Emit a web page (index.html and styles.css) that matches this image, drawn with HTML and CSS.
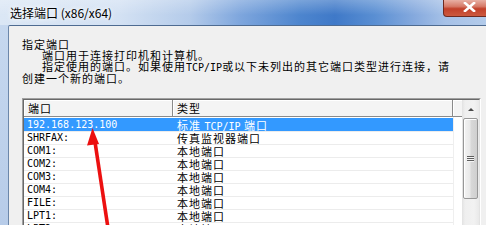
FILE: index.html
```html
<!DOCTYPE html>
<html lang="zh-CN">
<head>
<meta charset="utf-8">
<title>选择端口</title>
<link rel="stylesheet" href="styles.css">
</head>
<body>
<div class="window">
  <div class="titlebar">
    <span class="title">选择端口 (x86/x64)</span>
    <div class="close">
      <svg width="13" height="10" viewBox="0 0 13 10"><path d="M2 1 L11 9 M11 1 L2 9" stroke="#fff" stroke-width="2.6" stroke-linecap="square"/></svg>
    </div>
  </div>
  <div class="frame">
    <div class="client">
      <div class="desc">
        <div>指定端口</div>
        <div class="indent">端口用于连接打印机和计算机。</div>
        <div class="indent">指定使用的端口。如果使用<span class="mono">TCP/IP</span>或以下未列出的其它端口类型进行连接，请</div>
        <div>创建一个新的端口。</div>
      </div>
      <div class="listbox">
        <div class="listinner">
          <div class="listmain">
            <div class="header">
              <div class="hcell c1">端口</div>
              <div class="hcell c2">类型</div>
              <div class="hfill"></div>
            </div>
            <div class="rows">
              <div class="row selected"><div class="cell c1 mono">192.168.123.100</div><div class="cell c2">标准 <span class="mono">TCP/IP</span> 端口</div></div>
              <div class="row"><div class="cell c1 mono">SHRFAX:</div><div class="cell c2">传真监视器端口</div></div>
              <div class="row"><div class="cell c1 mono">COM1:</div><div class="cell c2">本地端口</div></div>
              <div class="row"><div class="cell c1 mono">COM2:</div><div class="cell c2">本地端口</div></div>
              <div class="row"><div class="cell c1 mono">COM3:</div><div class="cell c2">本地端口</div></div>
              <div class="row"><div class="cell c1 mono">COM4:</div><div class="cell c2">本地端口</div></div>
              <div class="row"><div class="cell c1 mono">FILE:</div><div class="cell c2">本地端口</div></div>
              <div class="row"><div class="cell c1 mono">LPT1:</div><div class="cell c2">本地端口</div></div>
              <div class="row"><div class="cell c1 mono">LPT2:</div><div class="cell c2">本地端口</div></div>
            </div>
          </div>
          <div class="scrollbar">
            <div class="sb-up"><span class="tri"></span></div>
            <div class="thumb"><span class="grip"></span></div>
          </div>
        </div>
      </div>
    </div>
  </div>
  <svg class="arrow" width="486" height="225" viewBox="0 0 486 225">
    <line x1="95" y1="142" x2="108" y2="228" stroke="#ec1010" stroke-width="3.6"/>
    <polygon points="92.5,128 99,144 87,145.5" fill="#ec1010"/>
  </svg>
</div>
</body>
</html>
```
FILE: styles.css
```css
html, body {
  margin: 0;
  padding: 0;
}
body {
  width: 486px;
  height: 225px;
  overflow: hidden;
  font-family: "Noto Sans CJK SC", "Noto Sans", sans-serif;
  font-size: 11px;
  letter-spacing: 1px;
  color: #000;
}
.window {
  position: relative;
  width: 486px;
  height: 225px;
  display: flex;
  flex-direction: column;
  overflow: hidden;
}
.titlebar {
  height: 25px;
  flex-shrink: 0;
  display: flex;
  align-items: flex-start;
  background:
    linear-gradient(to bottom, rgba(255,255,255,0.25), rgba(255,255,255,0) 60%),
    linear-gradient(to right, #dbe7f5 0px, #d3e1f3 120px, #b4cbea 190px, #7ea6dd 240px, #4d85ce 300px, #3f79c8 335px, #5a8fd3 375px, #86aade 415px, #a6c1e7 445px, #b3cbea 486px);
}
.title {
  padding-left: 10px;
  line-height: 25px;
  font-size: 12px;
  letter-spacing: 0;
  color: #000;
  text-shadow: 0 0 4px #fff, 0 0 6px #fff;
}
.close {
  margin-left: auto;
  margin-right: -9px;
  width: 52px;
  height: 17px;
  box-sizing: border-box;
  border: 1px solid #6e2a20;
  border-top: none;
  border-radius: 0 0 4px 4px;
  background: linear-gradient(to bottom, #e8b0a4 0%, #d67a68 40%, #c2402a 55%, #cc5a3f 100%);
  display: flex;
  align-items: center;
  justify-content: center;
  padding-bottom: 2px;
}
.close svg {
  display: block;
}
.frame {
  flex: 1;
  display: flex;
  padding-left: 8px;
  background: linear-gradient(to bottom, #c6d8ef, #b6cbe8);
}
.client {
  flex: 1;
  border-top: 1px solid #4e6b91;
  border-left: 1px solid #6c87aa;
  border-top-left-radius: 2px;
  background: #f0f0f0;
  padding: 13px 5px 0 13px;
  display: flex;
  flex-direction: column;
}
.desc {
  line-height: 11px;
  white-space: nowrap;
}
.indent {
  padding-left: 20px;
}
.mono {
  font-family: "DejaVu Sans Mono", "Liberation Mono", monospace;
  font-size: 10px;
  letter-spacing: 0;
}
.listbox {
  margin-top: 14px;
  flex: 1;
  display: flex;
  border: 1px solid;
  border-color: #a0a0a0 #ffffff #ffffff #a0a0a0;
}
.listinner {
  flex: 1;
  display: flex;
  border: 1px solid;
  border-color: #696969 #e3e3e3 #e3e3e3 #696969;
  background: #fff;
}
.listmain {
  flex: 1;
  display: flex;
  flex-direction: column;
  min-width: 0;
}
.header {
  height: 17px;
  box-sizing: border-box;
  display: flex;
  background: #f4f4f4;
  border-bottom: 1px solid #8a8a8a;
  flex-shrink: 0;
}
.hcell {
  box-sizing: border-box;
  line-height: 16px;
  border-right: 1px solid #8a8a8a;
  box-shadow: inset 1px 1px 0 #fff;
}
.hcell.c1 {
  width: 149px;
  padding-left: 4px;
}
.hcell.c2 {
  width: 280px;
  padding-left: 4px;
}
.hfill {
  flex: 1;
  box-shadow: inset 1px 1px 0 #fff;
}
.rows {
  padding-top: 1px;
  width: 430px;
  box-sizing: border-box;
  border-right: 1px solid #efefef;
  flex: 1;
}
.row {
  display: flex;
  height: 13px;
  box-sizing: border-box;
  border-top: 1px solid #ececec;
}
.row.selected {
  background: #3399ff;
  border-top-color: #3399ff;
  color: #fff;
}
.cell {
  box-sizing: border-box;
  line-height: 12px;
  white-space: nowrap;
}
.cell.c1 {
  width: 149px;
  padding-left: 3px;
}
.cell.c2 {
  width: 280px;
  padding-left: 4px;
}
.scrollbar {
  width: 17px;
  flex-shrink: 0;
  display: flex;
  flex-direction: column;
  background: linear-gradient(to right, #e2e2e2 0px, #efefef 3px, #f2f2f2 12px, #e9e9e9 17px);
}
.sb-up {
  height: 18px;
  display: flex;
  align-items: center;
  justify-content: center;
}
.tri {
  width: 0;
  height: 0;
  border-left: 3px solid transparent;
  border-right: 3px solid transparent;
  border-bottom: 3px solid #4a4a4a;
}
.thumb {
  height: 81px;
  margin: 0 1px;
  box-sizing: border-box;
  border: 1px solid #979797;
  border-radius: 2px;
  background: linear-gradient(to right, #f4f4f4 0%, #e9e9e9 45%, #d8d8d8 55%, #cfcfcf 100%);
  box-shadow: inset 1px 1px 0 #fff;
  display: flex;
  align-items: center;
  justify-content: center;
}
.grip {
  width: 7px;
  height: 6px;
  background: repeating-linear-gradient(to bottom, #5e5e5e 0px, #5e5e5e 1px, #f4f4f4 1px, #f4f4f4 2px);
}
.arrow {
  position: absolute;
  left: 0;
  top: 0;
  pointer-events: none;
}
```
